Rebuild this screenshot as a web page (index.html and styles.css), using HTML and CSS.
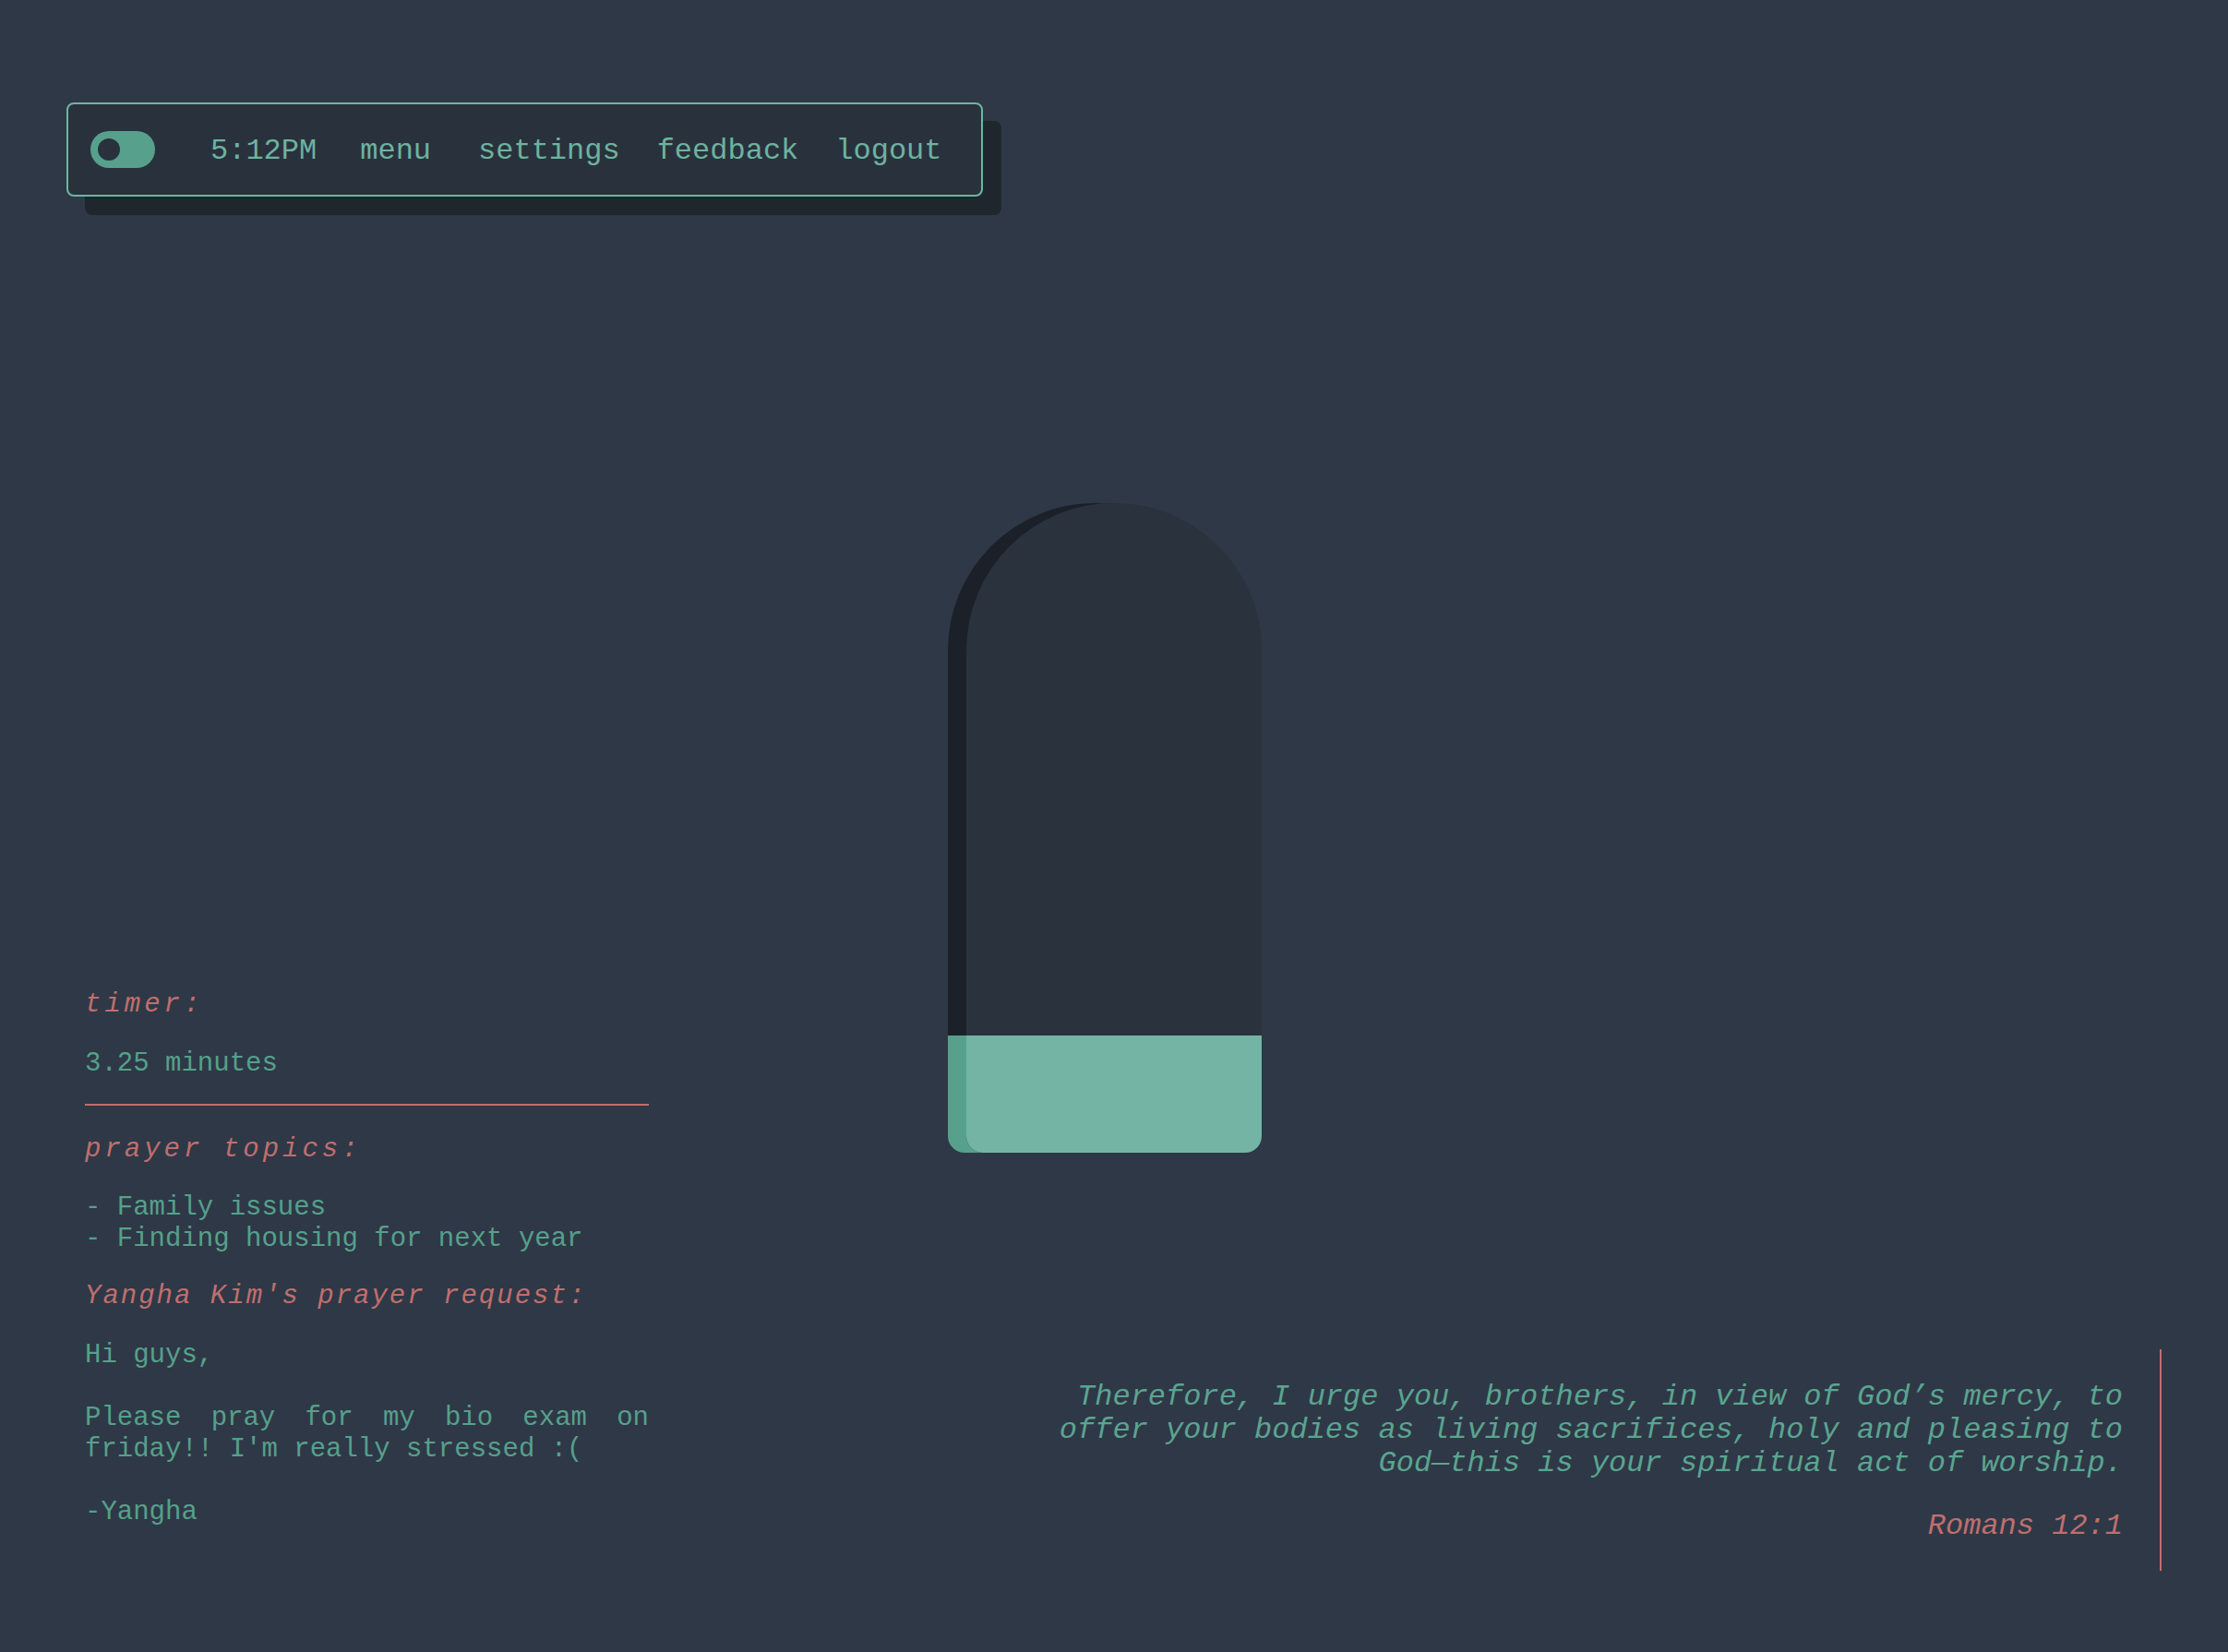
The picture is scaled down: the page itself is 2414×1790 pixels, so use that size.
FILE: index.html
```html
<!DOCTYPE html>
<html lang="en">
<head>
<meta charset="utf-8">
<title>Prayer</title>
<link rel="stylesheet" href="styles.css">
</head>
<body>
<div class="page">
  <header class="nav">
    <span class="toggle"><span class="knob"></span></span>
    <span class="nav-item time">5:12PM</span>
    <a class="nav-item menu">menu</a>
    <a class="nav-item settings">settings</a>
    <a class="nav-item feedback">feedback</a>
    <a class="nav-item logout">logout</a>
  </header>

  <div class="capsule">
    <div class="capsule-back"><div class="fill-back"></div></div>
    <div class="capsule-front"><div class="fill-front"></div></div>
  </div>

  <aside class="panel">
    <h2 class="label wide">timer:</h2>
    <p class="value">3.25 minutes</p>
    <hr class="divider">
    <h2 class="label wide">prayer topics:</h2>
    <ul class="topics">
      <li>- Family issues</li>
      <li>- Finding housing for next year</li>
    </ul>
    <h2 class="label narrow">Yangha Kim's prayer request:</h2>
    <p class="value">Hi guys,</p>
    <p class="letter">Please pray for my bio exam on friday!! I'm really stressed :(</p>
    <p class="letter">-Yangha</p>
  </aside>

  <blockquote class="verse">
    <p class="verse-text">Therefore, I urge you, brothers, in view of God’s mercy, to offer your bodies as living sacrifices, holy and pleasing to God—this is your spiritual act of worship.</p>
    <p class="verse-ref">Romans 12:1</p>
  </blockquote>
</div>
</body>
</html>
```

FILE: styles.css
```css
html, body {
  margin: 0;
  padding: 0;
}

body {
  background: #2f3847;
  font-family: "Liberation Mono", "Courier New", monospace;
  color: #56a08b;
}

.page {
  display: grid;
  grid-template-columns: 1fr;
  grid-template-rows: 1790px;
  height: 1790px;
  overflow: hidden;
}

.page > * {
  grid-area: 1 / 1;
}

/* ---------- nav ---------- */
.nav {
  justify-self: start;
  align-self: start;
  margin: 111px 0 0 72px;
  display: flex;
  align-items: center;
  height: 98px;
  padding: 0 42px 0 24px;
  border: 2px solid #6db5a1;
  border-radius: 8px;
  background: #29323c;
  box-shadow: 20px 20px 0 #1f262d;
  font-size: 32px;
  color: #6db3a0;
}

.toggle {
  display: flex;
  align-items: center;
  width: 70px;
  height: 40px;
  border-radius: 20px;
  background: #57a08c;
  padding-left: 8px;
  box-sizing: border-box;
  margin-right: 60px;
}

.knob {
  width: 24px;
  height: 24px;
  border-radius: 50%;
  background: #29323c;
}

.nav-item {
  white-space: nowrap;
  line-height: 36px;
  padding-top: 3px;
}

.menu { margin-left: 47px; }
.settings { margin-left: 51px; }
.feedback { margin-left: 40px; }
.logout { margin-left: 40px; }

/* ---------- capsule ---------- */
.capsule {
  place-self: center;
  display: grid;
  width: 320px;
  height: 704px;
  margin-top: 3px;
}

.capsule > div {
  grid-area: 1 / 1;
  width: 320px;
  height: 704px;
  border-radius: 160px 160px 18px 18px / 160px 160px 18px 18px;
  overflow: hidden;
  display: flex;
  flex-direction: column;
  justify-content: flex-end;
}

.capsule-back {
  margin-left: -20px;
  background: #1b2029;
}

.capsule-front {
  background: #29323d;
}

.fill-back {
  height: 127px;
  background: #57a08c;
}

.fill-front {
  height: 127px;
  background: #74b4a4;
}

/* ---------- left panel ---------- */
.panel {
  justify-self: start;
  align-self: end;
  width: 611px;
  margin: 0 0 134px 92px;
  font-size: 29px;
  line-height: 34px;
}

.panel p,
.panel h2,
.panel ul {
  margin: 0;
}

.label {
  font-size: 29px;
  font-weight: normal;
  font-style: italic;
  color: #bf6f6d;
}

.label.wide { letter-spacing: 4px; }
.label.narrow { letter-spacing: 2px; }

.value {
  margin-top: 30px !important;
}

.divider {
  border: 0;
  height: 2px;
  background: #bf6f6d;
  margin: 26px 0 31px 0;
}

.topics {
  list-style: none;
  padding: 0;
  margin-top: 29px !important;
  margin-bottom: 28px !important;
}

.letter {
  margin-top: 34px !important;
  text-align: justify;
}

/* ---------- verse ---------- */
.verse {
  justify-self: end;
  align-self: end;
  margin: 0 72px 88px 0;
  width: 1160px;
  padding: 34px 40px 30px 0;
  border-right: 2px solid #bf6f6d;
  font-style: italic;
  font-size: 32px;
  line-height: 36px;
  text-align: right;
}

.verse p {
  margin: 0;
}

.verse-text {
  color: #5aa590;
}

.verse-ref {
  margin-top: 32px !important;
  color: #bf6f6d;
}
```
